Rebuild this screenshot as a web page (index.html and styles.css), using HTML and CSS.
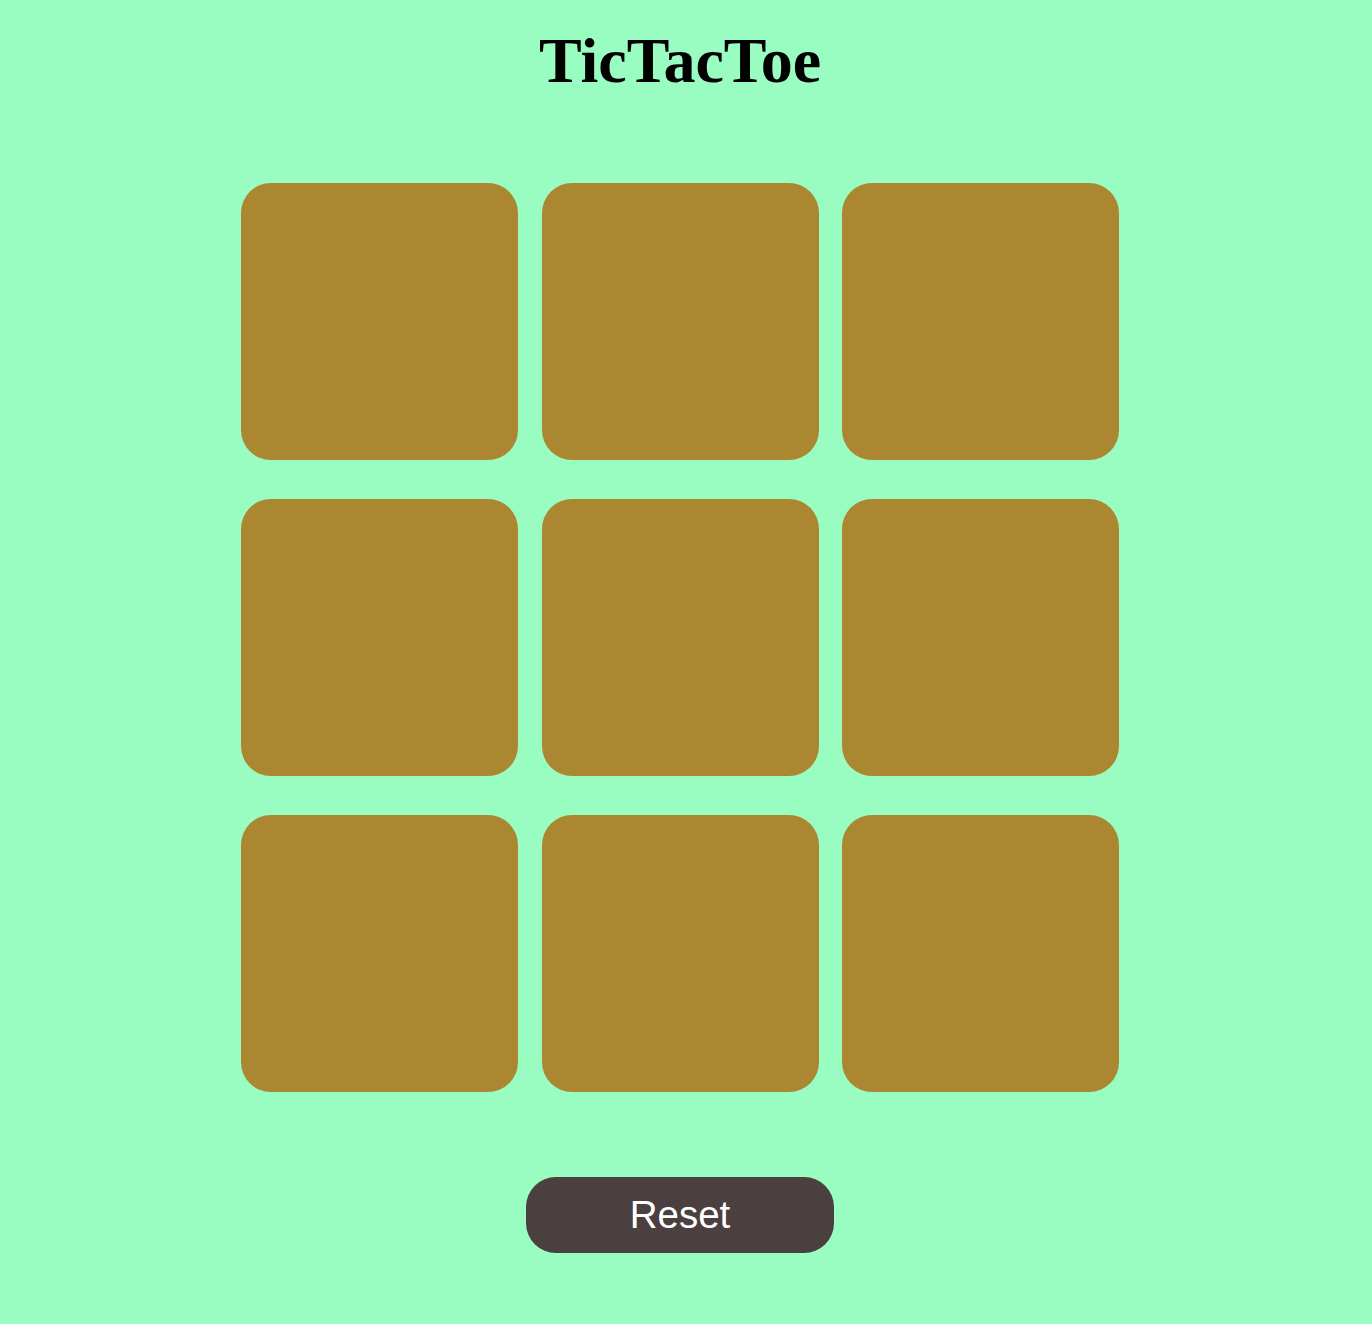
FILE: index.html
```html
<!DOCTYPE html>
<html>
<head>
<meta charset="utf-8">
<title>TicTacToe</title>
<link rel="stylesheet" href="styles.css">
</head>
<body>
<main class="page">
  <h1 class="title">TicTacToe</h1>
  <div class="board">
    <button class="cell"></button>
    <button class="cell"></button>
    <button class="cell"></button>
    <button class="cell"></button>
    <button class="cell"></button>
    <button class="cell"></button>
    <button class="cell"></button>
    <button class="cell"></button>
    <button class="cell"></button>
  </div>
  <button class="reset">Reset</button>
</main>
</body>
</html>
```
FILE: styles.css
```css
html, body {
  margin: 0;
  padding: 0;
  background: #99fcc1;
}
.page {
  width: 1360px;
  display: flex;
  flex-direction: column;
  align-items: center;
}
.title {
  margin: 25px 0 0 0;
  font-family: "Liberation Serif", "Times New Roman", serif;
  font-weight: bold;
  font-size: 64px;
  line-height: 71px;
  color: #000;
}
.board {
  margin-top: 87px;
  display: grid;
  grid-template-columns: repeat(3, 277px);
  grid-auto-rows: 277px;
  column-gap: 23.5px;
  row-gap: 39px;
}
.cell {
  border: none;
  padding: 0;
  background: #ab8732;
  border-radius: 30px;
}
.reset {
  margin-top: 85px;
  width: 308px;
  height: 76px;
  border: none;
  border-radius: 30px;
  background: #4b3f3f;
  color: #fff;
  font-family: "Liberation Sans", Arial, sans-serif;
  font-size: 38.5px;
  padding: 0;
}
```
